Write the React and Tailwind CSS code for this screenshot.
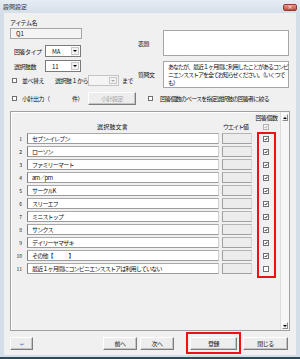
import React from "react";

const choices = [
  "セブン-イレブン",
  "ローソン",
  "ファミリーマート",
  "am／pm",
  "サークルK",
  "スリーエフ",
  "ミニストップ",
  "サンクス",
  "デイリーヤマザキ",
  "その他【　　　】",
  "最近１ヶ月間にコンビニエンスストアは利用していない",
];

const CheckBox = ({ checked, disabled, className = "w-[5px] h-[5px]" }) => (
  <span
    className={`${className} shrink-0 border flex items-center justify-center ${
      disabled ? "border-[#b4b4b4] bg-[#f4f4f4]" : "border-[#6f6f6f] bg-white"
    }`}
  >
    {checked && (
      <svg viewBox="0 0 6 6" className="w-full h-full">
        <path d="M1 3l1.5 1.6L5.2 1.2" fill="none" stroke={disabled ? "#a8a8a8" : "#111"} strokeWidth="1.3" />
      </svg>
    )}
  </span>
);

const Select = ({ value, disabled, className }) => (
  <div
    className={`${className} flex border ${
      disabled ? "border-[#c4c4c4] bg-[#f4f4f4]" : "border-[#7a7a7a] bg-white"
    }`}
  >
    <span className="flex-1 pl-[6px] flex items-center text-[6px]">{value}</span>
    <span className="w-[8px] m-[1px] flex items-center justify-center bg-[#f2f2f2] border border-[#c8c8c8]">
      <svg width="4" height="2" viewBox="0 0 4 2">
        <path d="M0 0h4L2 2z" fill={disabled ? "#a8a8a8" : "#000"} />
      </svg>
    </span>
  </div>
);

const Btn = ({ children, className, disabled }) => (
  <div
    className={`${className} h-[13px] flex items-center justify-center bg-[#ededed] border border-t-white border-l-white border-r-[#7d7d7d] border-b-[#7d7d7d] shadow-[inset_-1px_-1px_0_#c4c4c4] text-[6px] tracking-[-0.5px] ${
      disabled ? "text-[#a4a4a4]" : "text-[#111]"
    }`}
  >
    {children}
  </div>
);

const ScrollArrow = ({ down }) => (
  <div className="mx-[1px] h-[7px] flex items-center justify-center bg-[#ececec] border border-t-white border-l-white border-r-[#8a8a8a] border-b-[#8a8a8a]">
    <svg width="4" height="2" viewBox="0 0 4 2">
      <path d={down ? "M0 0h4L2 2z" : "M0 2h4L2 0z"} fill="#000" />
    </svg>
  </div>
);

export default function App() {
  return (
    <div className="w-[300px] h-[359px] flex flex-col bg-[#d3dee9] font-['Noto_Sans_CJK_JP',sans-serif] text-[#111] overflow-hidden">
      {/* title bar */}
      <div className="h-[13px] flex items-center justify-between pl-[3px] pr-[3px] bg-gradient-to-b from-[#e6edf4] to-[#d5dfe9]">
        <span className="text-[6px] text-[#333]">設問設定</span>
        <span className="w-[14px] h-[7px] mt-[1px] rounded-[2px] bg-gradient-to-b from-[#e49a8c] to-[#c4473a] border border-[#8e3b33] flex items-center justify-center text-white text-[6px] leading-none">
          ×
        </span>
      </div>

      {/* body */}
      <div className="ml-[4px] w-[292px] h-[342px] bg-[#f0f0f0] pl-[6px] pr-[6px] pb-[1px] flex flex-col">
        <div className="flex items-start">
          {/* left column */}
          <div className="w-[128px] flex flex-col">
            <div className="mt-[6px] h-[8px] leading-[8px] text-[6px] tracking-[-0.5px]">アイテム名</div>
            <div className="mt-[1px] h-[11px] w-[72px] border border-[#a6a6a6] bg-[#f4f4f4] pl-[5px] flex items-center text-[6px]">
              Q1
            </div>
            <div className="mt-[6px] h-[12px] flex items-center pl-[4px]">
              <span className="w-[31px] text-[6px] tracking-[-0.5px]">回答タイプ</span>
              <Select value="MA" className="w-[36px] h-[12px]" />
            </div>
            <div className="mt-[3px] h-[12px] flex items-center pl-[4px]">
              <span className="w-[31px] text-[6px] tracking-[-0.5px]">選択肢数</span>
              <Select value="11" className="w-[36px] h-[12px]" />
            </div>
            <div className="mt-[3px] h-[11px] flex items-center pl-[2px]">
              <CheckBox />
              <span className="ml-[5px] w-[33px] text-[6px] tracking-[-0.5px]">並べ替え</span>
              <span className="w-[33px] text-[6px] tracking-[-0.5px] whitespace-nowrap">選択肢１から</span>
              <Select disabled value="" className="w-[31px] h-[11px]" />
              <span className="ml-[3px] text-[6px] tracking-[-0.5px]">まで</span>
            </div>
          </div>

          {/* right column */}
          <div className="w-[152px] flex flex-col">
            <div className="mt-[17px] h-[26px] flex items-center">
              <span className="w-[25px] text-[6px] tracking-[-0.5px]">表題</span>
              <div className="w-[126px] h-full border border-[#a6a6a6] bg-white" />
            </div>
            <div className="mt-[5px] h-[27px] flex items-center">
              <span className="w-[25px] text-[6px] tracking-[-0.5px]">質問文</span>
              <div className="w-[126px] h-full border border-[#a6a6a6] bg-white pl-[4px] pt-[1px] text-[6px] tracking-[-1px] leading-[8px] whitespace-nowrap">
                あなたが、最近１ヶ月間に利用したことがあるコンビ
                <br />
                ニエンスストアを全てお知らせください。（いくつで
                <br />
                も）
              </div>
            </div>
          </div>
        </div>

        {/* subtotal row */}
        <div className="mt-[4px] h-[13px] flex items-center pl-[2px]">
          <CheckBox />
          <span className="ml-[5px] w-[50px] text-[6px] tracking-[-0.5px]">小計出力（</span>
          <span className="w-[16px] text-[6px] tracking-[-0.5px]">件）</span>
          <Btn disabled className="w-[48px]">小計設定</Btn>
          <span className="ml-[12px]">
            <CheckBox />
          </span>
          <span className="ml-[7px] text-[6px] tracking-[-0.8px] whitespace-nowrap">回答個数のベースを指定選択肢の回答者に絞る</span>
        </div>

        {/* grid panel */}
        <div className="mt-[6px] h-[220px] w-[280px] border border-[#a0a0a0] shadow-[inset_1px_1px_0_#ffffff] flex relative">
          <div className="w-[269px] flex flex-col">
            <div className="mt-[2px] h-[8px] flex">
              <span className="ml-[242px] w-[28px] text-center text-[6px] tracking-[-0.5px] leading-[8px]">回答個数</span>
            </div>
            <div className="h-[9px] flex items-center">
              <span className="w-[16px]" />
              <span className="w-[192px] pl-[70px] text-[6px] tracking-[0.2px]">選択肢文言</span>
              <span className="ml-[3px] w-[30px] pl-[1px] text-[6px] tracking-[-1px]">ウエイト値</span>
              <span className="w-[28px] flex justify-center">
                <CheckBox checked disabled className="w-[6px] h-[6px]" />
              </span>
            </div>
            <div className="mt-[2px] flex flex-col gap-[2px]">
              {choices.map((c, i) => (
                <div key={i} className="h-[11px] flex items-center">
                  <span className="w-[16px] pr-[5px] text-right text-[5px]">{i + 1}</span>
                  <div className="w-[192px] h-full bg-white border border-l-[#7f7f7f] border-t-[#a9a9a9] border-b-[#9c9c9c] border-r-[#d0d0d0] pl-[4px] flex items-center text-[6px] tracking-[-0.8px] whitespace-nowrap overflow-hidden">
                    {c}
                  </div>
                  <div className="ml-[3px] w-[30px] h-full bg-[#ececec] border border-l-[#a0a0a0] border-t-[#b4b4b4] border-b-[#a0a0a0] border-r-[#d6d6d6]" />
                  <span className="w-[28px] flex justify-center">
                    <CheckBox checked={i < 10} className="w-[6px] h-[6px]" />
                  </span>
                </div>
              ))}
            </div>
          </div>

          {/* scrollbar */}
          <div className="w-[9px] bg-[#f6f6f6] border-l border-[#dcdcdc] flex flex-col justify-between pt-[2px] pb-[1px]">
            <ScrollArrow />
            <ScrollArrow down />
          </div>

          {/* highlight */}
          <div className="absolute left-[246px] top-[20px] w-[19px] h-[146px] border-2 border-[#ee1111]" />
        </div>

        {/* button row */}
        <div className="mt-[1px] h-[22px] flex items-start">
          <Btn className="mt-[5px] w-[23px]">
            <span className="text-[#3b5fc0] text-[5px]">↩</span>
          </Btn>
          <Btn className="mt-[5px] ml-[70px] w-[34px]">前へ</Btn>
          <Btn className="mt-[5px] ml-[3px] w-[34px]">次へ</Btn>
          <div className="ml-[12px] h-[22px] border-2 border-[#ee1111] pt-[3px] pl-[2px] pr-[2px]">
            <Btn className="w-[47px]">登録</Btn>
          </div>
          <Btn className="mt-[5px] ml-[2px] w-[45px]">閉じる</Btn>
        </div>
      </div>

      {/* bottom frame */}
      <div className="h-[2px]" />
      <div className="flex-1 bg-[#2e4a58]" />
    </div>
  );
}
